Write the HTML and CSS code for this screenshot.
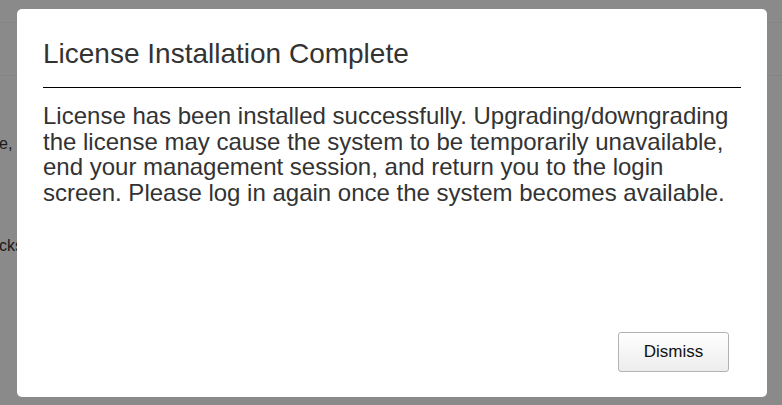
FILE: index.html
```html
<!DOCTYPE html>
<html>
<head>
<meta charset="utf-8">
<link rel="stylesheet" href="styles.css">
</head>
<body>
<div class="page">
  <div class="bg-rule"></div>
  <div class="bg-rule second"></div>
  <p class="bg-line one">the device,</p>
  <p class="bg-line two">cks</p>
</div>
<div class="overlay">
  <div class="dialog">
    <div class="dialog-header">
      <h2 class="dialog-title">License Installation Complete</h2>
    </div>
    <div class="dialog-body">
      <p>License has been installed successfully. Upgrading/downgrading the license may cause the system to be temporarily unavailable, end your management session, and return you to the login screen. Please log in again once the system becomes available.</p>
    </div>
    <div class="dialog-footer">
      <button class="btn">Dismiss</button>
    </div>
  </div>
</div>
</body>
</html>
```

FILE: styles.css
```css
html, body {
  margin: 0;
  padding: 0;
}
body {
  width: 782px;
  height: 405px;
  overflow: hidden;
  background: #ffffff;
  font-family: "Liberation Sans", Arial, sans-serif;
  color: #333333;
  position: relative;
}
.page {
  display: flex;
  flex-direction: column;
  height: 405px;
}
.bg-rule {
  height: 1px;
  background: #f4f4f4;
  margin-top: 22px;
}
.bg-rule.second {
  margin-top: 52px;
}
.bg-line {
  margin: 0;
  font-size: 16px;
  line-height: 20px;
  white-space: nowrap;
}
.bg-line.one {
  margin-top: 58px;
  margin-left: -65px;
}
.bg-line.two {
  margin-top: 82px;
  margin-left: -1px;
}
.overlay {
  position: absolute;
  inset: 0;
  background: rgba(0, 0, 0, 0.46);
  display: flex;
  align-items: flex-start;
}
.dialog {
  margin: 9px 0 0 17px;
  width: 750px;
  height: 388px;
  background: #ffffff;
  border-radius: 5px;
  display: flex;
  flex-direction: column;
  padding: 0 26px;
  box-sizing: border-box;
}
.dialog-header {
  padding-top: 29px;
  padding-bottom: 17px;
  border-bottom: 1px solid #000000;
}
.dialog-title {
  margin: 0;
  font-size: 28px;
  line-height: 32px;
  font-weight: normal;
  color: #333333;
}
.dialog-body p {
  margin: 15px 0 0 0;
  font-size: 24px;
  line-height: 25.7px;
  color: #333333;
}
.dialog-footer {
  margin-top: auto;
  display: flex;
  justify-content: flex-end;
  padding: 0 12px 25px 0;
}
.btn {
  width: 111px;
  height: 40px;
  font-family: "Liberation Sans", Arial, sans-serif;
  font-size: 17px;
  color: #111111;
  background: linear-gradient(#ffffff, #ececec);
  border: 1px solid #b3b3b3;
  border-radius: 3px;
  padding: 0;
}
```
